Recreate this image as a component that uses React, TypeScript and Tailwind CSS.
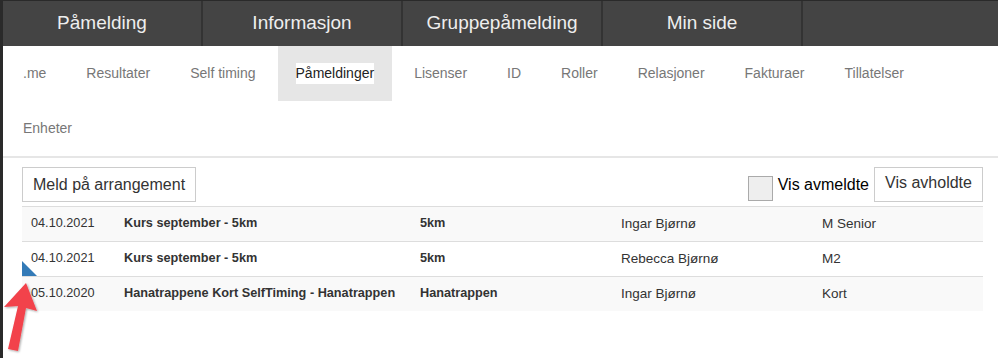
const mainNav = ["Påmelding", "Informasjon", "Gruppepåmelding", "Min side"]

const tabs = [
    ".me",
    "Resultater",
    "Self timing",
    "Påmeldinger",
    "Lisenser",
    "ID",
    "Roller",
    "Relasjoner",
    "Fakturaer",
    "Tillatelser",
    "Enheter",
]

const rows = [
    { date: "04.10.2021", event: "Kurs september - 5km", dist: "5km", name: "Ingar Bjørnø", cls: "M Senior" },
    { date: "04.10.2021", event: "Kurs september - 5km", dist: "5km", name: "Rebecca Bjørnø", cls: "M2" },
    { date: "05.10.2020", event: "Hanatrappene Kort SelfTiming - Hanatrappen", dist: "Hanatrappen", name: "Ingar Bjørnø", cls: "Kort" },
]

export default function App() {
    return (
        <div className="relative w-[998px] h-[358px] overflow-hidden bg-white border-t border-l-[3px] border-[#2a2a2a] font-['Liberation_Sans',Arial,sans-serif]">
            {/* top nav */}
            <div className="flex h-[45px] bg-[#444444]">
                {mainNav.map((item) => (
                    <div
                        key={item}
                        className="w-[200px] shrink-0 border-r-2 border-[#333333] flex items-center justify-center text-[19px] text-[#eeeeee]"
                    >
                        {item}
                    </div>
                ))}
            </div>

            {/* sub tabs */}
            <div className="flex flex-wrap border-b-2 border-[#e6e6e6]">
                {tabs.map((t) => {
                    const active = t === "Påmeldinger"
                    return (
                        <div
                            key={t}
                            className={`mx-[2px] px-[18px] h-[55px] flex items-center text-[14px] ${active ? "bg-[#e6e6e6] text-[#222]" : "text-[#777]"}`}
                        >
                            <span className={active ? "bg-white" : ""}>{t}</span>
                        </div>
                    )
                })}
            </div>

            {/* content */}
            <div className="pl-[19px] pr-[15px] pt-[9px]">
                <div className="flex items-center justify-between">
                    <button className="h-[35px] px-[10px] border border-[#cccccc] text-[16px] text-[#333]">
                        Meld på arrangement
                    </button>
                    <div className="flex items-center">
                        <span className="w-[25px] h-[25px] bg-[#eeeeee] border border-[#aaaaaa] mt-[7px]" />
                        <span className="ml-[5px] text-[16px] text-black mt-[1px]">Vis avmeldte</span>
                        <button className="ml-[5px] h-[35px] w-[109px] border border-[#cccccc] text-[16px] text-[#333] pb-[3px]">
                            Vis avholdte
                        </button>
                    </div>
                </div>

                <div className="mt-[4px] relative">
                    {rows.map((r, i) => (
                        <div
                            key={i}
                            className={`relative flex h-[35px] items-center border-t border-[#dddddd] text-[#333] ${i % 2 === 0 ? "bg-[#f9f9f9]" : "bg-white"}`}
                        >
                            <div className="w-[93px] pl-[9px] text-[12.7px]">{r.date}</div>
                            <div className="w-[296px] pl-[9px] text-[12.7px] font-bold">{r.event}</div>
                            <div className="w-[201px] pl-[9px] text-[12.7px] font-bold">{r.dist}</div>
                            <div className="w-[201px] pl-[9px] text-[13.5px]">{r.name}</div>
                            <div className="flex-1 pl-[9px] text-[13.5px]">{r.cls}</div>
                            {i === 1 && (
                                <svg className="absolute left-0 bottom-0" width="15" height="15" viewBox="0 0 15 15">
                                    <polygon points="0,0 0,15 15,15" fill="#337ab7" />
                                </svg>
                            )}
                        </div>
                    ))}
                </div>
            </div>

            {/* red annotation arrow */}
            <svg className="absolute left-[-3px] top-[270px]" width="50" height="88" viewBox="0 0 50 88">
                <defs>
                    <filter id="sh" x="-50%" y="-50%" width="200%" height="200%">
                        <feDropShadow dx="1" dy="1" stdDeviation="1.2" floodColor="#000" floodOpacity="0.35" />
                    </filter>
                </defs>
                <g filter="url(#sh)" fill="#f2424b">
                    <polygon points="26,12 4,36 18,35 8,78 18,80 26,37 37,40" />
                </g>
            </svg>
        </div>
    )
}
